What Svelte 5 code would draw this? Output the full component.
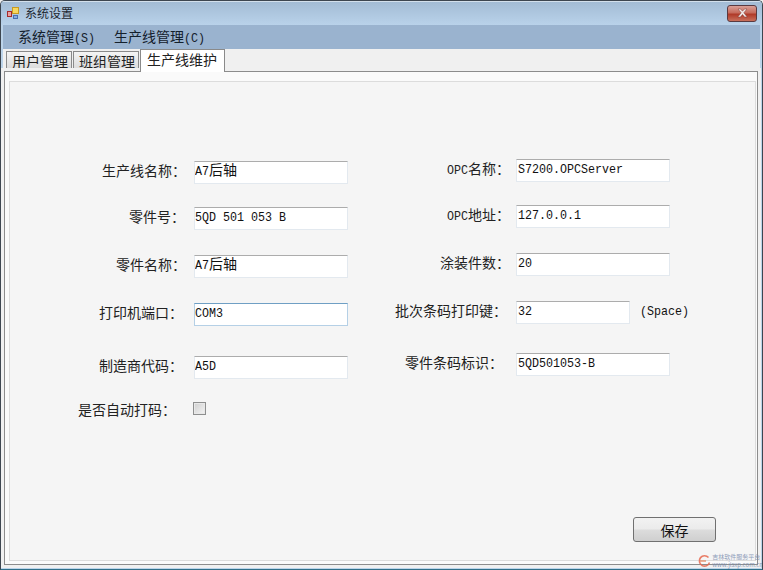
<script>
  const isLatin = (c) => c.charCodeAt(0) < 128;

  // SimSun-like text: latin is half the width of the CJK glyphs
  function runs(text) {
    const out = [];
    for (const c of text) {
      const latin = isLatin(c);
      const last = out[out.length - 1];
      if (last && last.latin === latin) last.text += c;
      else out.push({ latin, text: c });
    }
    return out;
  }

  const leftRows = [
    { label: "生产线名称：", value: "A7后轴", nudge: 0 },
    { label: "零件号：", value: "5QD 501 053 B", nudge: 1 },
    { label: "零件名称：", value: "A7后轴", nudge: 0 },
    { label: "打印机端口：", value: "COM3", focused: true, nudge: 3 },
    { label: "制造商代码：", value: "A5D", nudge: 3 },
  ];

  const rightRows = [
    { label: "OPC名称：", value: "S7200.OPCServer", nudge: 0 },
    { label: "OPC地址：", value: "127.0.0.1", nudge: 0 },
    { label: "涂装件数：", value: "20", nudge: 0 },
    { label: "批次条码打印键：", value: "32", short: true, hint: "(Space)", nudge: 3 },
    { label: "零件条码标识：", value: "5QD501053-B", nudge: 7 },
  ];

  const tabs = ["用户管理", "班组管理", "生产线维护"];
</script>

{#snippet mixed(text)}
  {#each runs(text) as run}<span class:latin={run.latin}>{run.text}</span>{/each}
{/snippet}

<div class="window">
  <div class="titlebar">
    <svg class="app-icon" width="16" height="16" viewBox="0 0 16 16">
      <rect x="1.5" y="6.5" width="4" height="5" fill="#e9a0a0" stroke="#a52a2a" />
      <rect x="6.5" y="2.5" width="6" height="6" fill="#f8d860" stroke="#c89a20" />
      <rect x="7.5" y="10.5" width="4" height="3" fill="#88aee0" stroke="#4a70b0" />
    </svg>
    <span class="title">系统设置</span>
    <div class="close">
      <svg width="13" height="10" viewBox="0 0 13 10">
        <path d="M2 1h2.500l2 2.200 2-2.200h2.500l-3.200 3.800 3.400 4.200h-2.600l-2.100-2.500-2.100 2.500h-2.600l3.400-4.200z" fill="#f4ecea" stroke="#7a3a34" stroke-width="0.5" />
      </svg>
    </div>
  </div>

  <div class="menubar">
    <span class="menu">{@render mixed("系统管理(S)")}</span>
    <span class="menu">{@render mixed("生产线管理(C)")}</span>
  </div>

  <div class="tabs">
    {#each tabs as tab, i}
      <div class="tab" class:active={i === 2}>{tab}</div>
    {/each}
  </div>

  <div class="panel">
    <div class="inner">
      <div class="form">
        <div class="col left">
          {#each leftRows as row}
            <div class="row">
              <div class="label" style="padding-right: {8 + row.nudge}px">{@render mixed(row.label)}</div>
              <div class="textbox" class:focused={row.focused}>{@render mixed(row.value)}</div>
            </div>
          {/each}
          <div class="row check-row">
            <div class="label check-label">是否自动打码：</div>
            <div class="checkbox"></div>
          </div>
        </div>

        <div class="col right">
          {#each rightRows as row}
            <div class="row">
              <div class="label" style="padding-right: {6 + row.nudge}px">{@render mixed(row.label)}</div>
              <div class="textbox" class:short={row.short}>{@render mixed(row.value)}</div>
              {#if row.hint}<span class="hint latin">{row.hint}</span>{/if}
            </div>
          {/each}
        </div>
      </div>

      <div class="actions">
        <button class="save">保存</button>
      </div>
    </div>
  </div>

  <div class="watermark">
    <svg width="14" height="14" viewBox="0 0 14 14">
      <path d="M11.500 3.500a5.200 5.200 0 1 0 1 5" fill="none" stroke="#e86a50" stroke-width="1.600" />
      <path d="M3 7h6" stroke="#e88a60" stroke-width="1.500" />
    </svg>
    <div class="wm-text">
      <div>吉林软件服务平台</div>
      <div>www.jlsxp.com.cn</div>
    </div>
  </div>
</div>

<style>
  :global(body) {
    margin: 0;
    background: #f0f0f0;
  }

  .window {
    position: relative;
    width: 763px;
    height: 570px;
    box-sizing: border-box;
    display: flex;
    flex-direction: column;
    overflow: hidden;
    padding: 0 2px 2px;
    background: #bcd4ea;
    border: 1px solid #3d4650;
    border-bottom-color: #2f6f88;
    border-radius: 5px 5px 0 0;
    font-family: "Noto Sans CJK SC", "Liberation Sans", sans-serif;
    color: #111;
  }

  .latin {
    display: inline-block;
    font-family: "Liberation Mono", monospace;
    font-size: 0.834em;
    transform: scaleY(1.15);
  }

  .titlebar {
    height: 24px;
    flex: none;
    display: flex;
    align-items: center;
    margin: 0 -2px;
    padding: 0 5px;
    background: linear-gradient(#a2bbd4, #b9d2ea);
    box-shadow: inset 0 1px 0 #d3e0ec;
  }

  .app-icon {
    flex: none;
  }

  .title {
    margin: 0 0 2px 3px;
    font-size: 12px;
    color: #1c2630;
  }

  .close {
    margin-left: auto;
    width: 30px;
    height: 17px;
    display: flex;
    align-items: center;
    justify-content: center;
    border: 1px solid #5a3a40;
    border-radius: 3px;
    box-sizing: border-box;
    background: linear-gradient(#d9a097 0, #c66b5c 45%, #b03a28 55%, #c8705c 100%);
  }

  .menubar {
    height: 24px;
    flex: none;
    display: flex;
    align-items: center;
    gap: 19px;
    padding-left: 15px;
    background: #9ab3cf;
    font-size: 14px;
    color: #14202c;
  }

  .menu {
    margin-bottom: 2px;
  }

  .tabs {
    height: 22px;
    flex: none;
    display: flex;
    align-items: flex-end;
    padding-left: 3px;
    gap: 1px;
    background: #f0f0f0;
  }

  .tab {
    box-sizing: border-box;
    height: 20px;
    width: 66px;
    padding: 0 0 2px 5px;
    display: flex;
    align-items: center;
    font-size: 14px;
    color: #222;
    background: linear-gradient(#f4f4f4, #d8d8d8);
    border: 1px solid #8a8a8a;
    border-bottom: none;
  }

  .tab.active {
    position: relative;
    z-index: 1;
    width: 85px;
    height: 23px;
    margin-bottom: -1px;
    padding: 0 0 4px 6px;
    background: #fff;
  }

  .panel {
    flex: 1;
    min-height: 0;
    padding: 9px 1px 3px 4px;
    display: flex;
    border: 1px solid #8c8c8c;
    background: #fafafa;
    margin: 0 2px 2px 1px;
    box-shadow: 0 0 0 3px #f0f0f0;
  }

  .inner {
    flex: 1;
    position: relative;
    display: flex;
    flex-direction: column;
    background: #f5f5f5;
    border: 1px solid #dcdcdc;
  }

  .form {
    display: flex;
    padding: 76px 0 0 9px;
  }

  .col {
    display: grid;
    align-items: start;
  }

  .left {
    width: 342px;
    margin-top: 2px;
    grid-template-rows: 46px 48px 48px 53px 47px auto;
    grid-template-columns: 175px auto;
  }

  .right {
    grid-template-rows: 46px 48px 48px 52px auto;
    grid-template-columns: 155px auto;
  }

  .row {
    position: relative;
    display: grid;
    grid-column: 1 / -1;
    grid-template-columns: subgrid;
    align-items: center;
    height: 23px;
  }

  .label {
    margin-bottom: 5px;
    text-align: right;
    font-size: 14px;
    white-space: nowrap;
    color: #222;
  }

  .textbox {
    box-sizing: border-box;
    width: 154px;
    height: 23px;
    padding: 0;
    background: #fff;
    border: 1px solid #e3e9ef;
    border-top-color: #acacac;
    font-size: 14px;
    line-height: 15px;
    white-space: pre;
    color: #111;
  }

  .right .textbox {
    padding-left: 1px;
  }

  .textbox.focused {
    border-color: #b5d0e6;
    border-top-color: #6f9fc4;
  }

  .textbox.short {
    width: 114px;
  }

  .hint {
    position: absolute;
    left: 279px;
    font-size: 11.67px;
  }

  .check-row {
    align-items: start;
  }

  .checkbox {
    box-sizing: border-box;
    width: 13px;
    height: 13px;
    margin-left: -1px;
    border: 1px solid #8e8f8f;
    background: linear-gradient(135deg, #cfcfcf, #f4f4f4);
    box-shadow: inset 0 0 0 1px #e8e8e8;
  }

  .check-label {
    margin: -3px 0 0;
    padding-right: 18px;
  }

  .actions {
    margin-top: auto;
    display: flex;
    justify-content: flex-end;
    padding: 0 39px 18px 0;
  }

  .save {
    box-sizing: border-box;
    width: 83px;
    height: 25px;
    padding: 0;
    border: 1px solid #707070;
    border-radius: 3px;
    background: linear-gradient(#f2f2f2 0, #ebebeb 48%, #dcdcdc 52%, #cfcfcf 100%);
    font-family: inherit;
    font-size: 14px;
    color: #111;
  }

  .watermark {
    position: absolute;
    right: -1px;
    bottom: 0;
    display: flex;
    align-items: center;
    gap: 1px;
    color: #7d8fb0;
    font-size: 6px;
    line-height: 8px;
    opacity: 0.85;
  }

  .wm-text {
    white-space: nowrap;
  }
</style>
